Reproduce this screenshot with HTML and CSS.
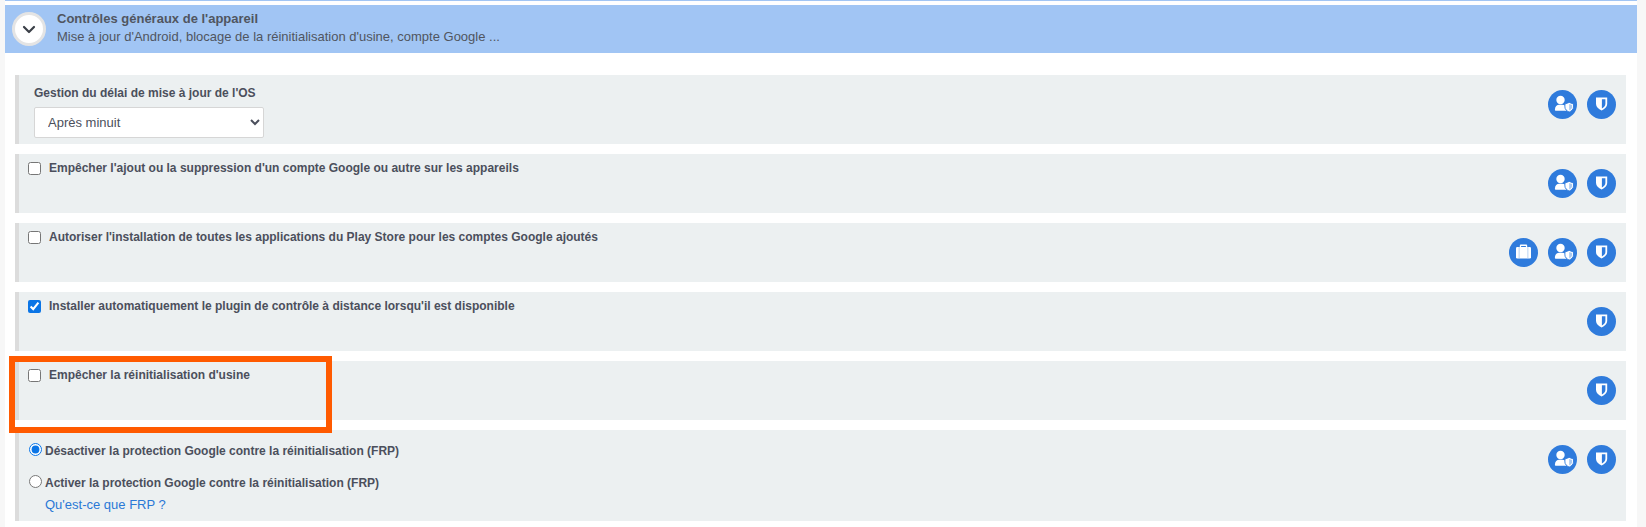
FILE: index.html
```html
<!DOCTYPE html>
<html lang="fr">
<head>
<meta charset="utf-8">
<title>Contrôles généraux de l'appareil</title>
<link rel="stylesheet" href="styles.css">
</head>
<body>
<svg class="defs" width="0" height="0" aria-hidden="true">
  <symbol id="i-shield" viewBox="0 0 29 29">
    <path fill="#fff" d="M9 7.500h11.200v6.500c0 3-2.500 4.900-5.600 6.500-3.100-1.600-5.600-3.500-5.600-6.500z"/>
    <path fill="#2f7bdc" d="M14.900 9.300h3.500v4.700c0 2-1.500 3.200-3.500 4.400z"/>
  </symbol>
  <symbol id="i-user" viewBox="0 0 29 29">
    <circle fill="#fff" cx="12.500" cy="10" r="4.200"/>
    <path fill="#fff" d="M8 20.800c-.7 0-1.100-.4-1.100-1.100 0-3 2-4.900 4.300-4.900h2.800c1.500 0 2.700.4 3.600 1.200l.8 4.800z"/>
    <path fill="#fff" stroke="#2f7bdc" stroke-width=".9" d="M16.900 14l4.300-1.600 4.300 1.600v3c0 2.400-1.900 3.900-4.300 5.100-2.400-1.200-4.300-2.700-4.300-5.100z"/>
    <path fill="#a9c9f0" d="M21.200 14l2.900 1v2c0 1.600-1.200 2.600-2.900 3.500z"/>
  </symbol>
  <symbol id="i-case" viewBox="0 0 29 29">
    <path fill="#fff" d="M10.800 9V7.800c0-.8.500-1.300 1.300-1.300h4.800c.8 0 1.300.5 1.300 1.300V9h-1.300V7.900h-4.800V9z"/>
    <rect fill="#fff" x="7" y="9" width="15" height="11.500" rx="1.200"/>
    <path fill="#a9c9f0" d="M9.700 9h.8v11.500h-.8zM18.500 9h.8v11.500h-.8z"/>
  </symbol>
</svg>
<div class="strip"></div>
<main class="panel">
  <header class="head">
    <button class="toggle" type="button" aria-label="Replier">
      <svg width="14" height="9" viewBox="0 0 14 9"><path d="M2 2l5 5 5-5" fill="none" stroke="#3b4048" stroke-width="2.200" stroke-linecap="round" stroke-linejoin="round"/></svg>
    </button>
    <div class="head-text">
      <div class="head-title">Contrôles généraux de l'appareil</div>
      <div class="head-sub">Mise à jour d'Android, blocage de la réinitialisation d'usine, compte Google ...</div>
    </div>
  </header>
  <section class="rows">
    <div class="row row-select">
      <div class="main">
        <label class="label-block" for="delay">Gestion du délai de mise à jour de l'OS</label>
        <select id="delay" class="select"><option>Après minuit</option></select>
      </div>
      <div class="icons">
        <span class="icon"><svg><use href="#i-user"/></svg></span>
        <span class="icon"><svg><use href="#i-shield"/></svg></span>
      </div>
    </div>
    <div class="row">
      <label class="check"><input type="checkbox"><span>Empêcher l'ajout ou la suppression d'un compte Google ou autre sur les appareils</span></label>
      <div class="icons">
        <span class="icon"><svg><use href="#i-user"/></svg></span>
        <span class="icon"><svg><use href="#i-shield"/></svg></span>
      </div>
    </div>
    <div class="row">
      <label class="check"><input type="checkbox"><span>Autoriser l'installation de toutes les applications du Play Store pour les comptes Google ajoutés</span></label>
      <div class="icons">
        <span class="icon"><svg><use href="#i-case"/></svg></span>
        <span class="icon"><svg><use href="#i-user"/></svg></span>
        <span class="icon"><svg><use href="#i-shield"/></svg></span>
      </div>
    </div>
    <div class="row">
      <label class="check"><input type="checkbox" checked><span>Installer automatiquement le plugin de contrôle à distance lorsqu'il est disponible</span></label>
      <div class="icons">
        <span class="icon"><svg><use href="#i-shield"/></svg></span>
      </div>
    </div>
    <div class="row">
      <label class="check"><input type="checkbox"><span>Empêcher la réinitialisation d'usine</span></label>
      <div class="icons">
        <span class="icon"><svg><use href="#i-shield"/></svg></span>
      </div>
    </div>
    <div class="row row-radio">
      <div class="main radios">
        <label class="radio radio-first"><input type="radio" name="frp" checked><span>Désactiver la protection Google contre la réinitialisation (FRP)</span></label>
        <label class="radio"><input type="radio" name="frp"><span>Activer la protection Google contre la réinitialisation (FRP)</span></label>
        <a class="link" href="#">Qu'est-ce que FRP ?</a>
      </div>
      <div class="icons">
        <span class="icon"><svg><use href="#i-user"/></svg></span>
        <span class="icon"><svg><use href="#i-shield"/></svg></span>
      </div>
    </div>
  </section>
  <div class="highlight"></div>
</main>
</body>
</html>
```
FILE: styles.css
```css
* { box-sizing: border-box; }
html, body { margin: 0; padding: 0; }
body {
  background: #f7f7f7;
  font-family: "Liberation Sans", Arial, sans-serif;
  color: #4b4f5c;
  width: 1646px;
  height: 527px;
  overflow: hidden;
}
.defs { position: absolute; }
.strip { height: 1px; background: #a1c5f4; margin-left: 5px; width: 1632px; }
.panel {
  position: relative;
  margin-left: 5px;
  width: 1632px;
  height: 526px;
  background: #fff;
  padding-top: 4px;
}
.head {
  height: 48px;
  background: #a1c5f4;
  display: flex;
  align-items: center;
  padding-left: 7px;
  gap: 11px;
}
.toggle {
  width: 34px;
  height: 34px;
  border-radius: 50%;
  border: 3px solid #e4e4e4;
  background: #fff;
  padding: 0;
  display: flex;
  align-items: center;
  justify-content: center;
  flex: none;
}
.head-text { margin-top: -2px; }
.head-title { font-size: 13px; font-weight: 700; line-height: 17px; color: #505560; }
.head-sub { font-size: 13px; line-height: 19px; color: #505560; }
.rows {
  margin: 22px 11px 0 10px;
  display: flex;
  flex-direction: column;
  gap: 10px;
}
.row {
  height: 59px;
  background: #ecf0f1;
  border-left: 4px solid #dcdcdc;
  display: flex;
  justify-content: space-between;
  align-items: flex-start;
  padding-right: 10px;
}
.row-select { height: 69px; }
.row-radio { height: 91px; }
.main { flex: none; }
.label-block {
  display: block;
  font-size: 12px;
  font-weight: 700;
  line-height: 14px;
  margin: 11px 0 0 15px;
}
.select {
  display: block;
  width: 230px;
  height: 31px;
  margin: 7px 0 0 15px;
  padding: 0 9px;
  font-family: inherit;
  font-size: 13px;
  color: #4b4f5c;
  background-color: #fff;
  border: 1px solid #d6d6d6;
  border-radius: 2px;
}
.check {
  display: flex;
  align-items: flex-start;
  font-size: 12px;
  font-weight: 700;
  line-height: 14px;
  padding: 7px 0 0 9px;
}
.check input {
  width: 13px;
  height: 13px;
  margin: 1px 8px 0 0;
  accent-color: #0b75e6;
}
.radios { padding: 12px 0 0 10px; }
.radio {
  display: flex;
  align-items: flex-start;
  font-size: 12px;
  font-weight: 700;
  line-height: 14px;
  height: 16px;
}
.radio span { margin-top: 2px; }
.radio-first { margin-bottom: 16px; }
.radio input { width: 13px; height: 13px; margin: 1px 3px 0 0; accent-color: #0b75e6; }
.link {
  display: block;
  margin: 8px 0 0 16px;
  font-size: 13px;
  line-height: 14px;
  color: #2a78d6;
  text-decoration: none;
}
.icons { display: flex; gap: 10px; padding-top: 15px; flex: none; }
.icon {
  width: 29px;
  height: 29px;
  border-radius: 50%;
  background: #2f7bdc;
  display: block;
}
.icon svg { display: block; width: 29px; height: 29px; }
.highlight {
  position: absolute;
  left: 4px;
  top: 355px;
  width: 323px;
  height: 77px;
  border: 6px solid #ff5a00;
}
```
